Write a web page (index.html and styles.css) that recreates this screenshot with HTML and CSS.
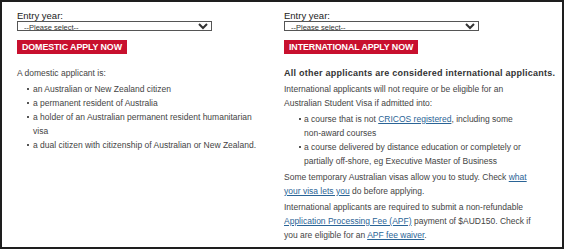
FILE: index.html
```html
<!DOCTYPE html>
<html lang="en">
<head>
    <meta charset="UTF-8">
    <title>Apply now</title>
    <link rel="stylesheet" href="styles.css">
</head>
<body>
    <div class="frame">
        <div class="col">
            <label class="entry-label" for="dom-year">Entry year:</label>
            <select id="dom-year" class="entry-select">
                <option>--Please select--</option>
            </select>
            <button class="apply-btn">Domestic apply now</button>
            <p>A domestic applicant is:</p>
            <ul class="list list-left">
                <li>an Australian or New Zealand citizen</li>
                <li>a permanent resident of Australia</li>
                <li>a holder of an Australian permanent resident humanitarian visa</li>
                <li>a dual citizen with citizenship of Australian or New Zealand.</li>
            </ul>
        </div>
        <div class="col">
            <label class="entry-label" for="int-year">Entry year:</label>
            <select id="int-year" class="entry-select">
                <option>--Please select--</option>
            </select>
            <button class="apply-btn">International apply now</button>
            <p class="lead">All other applicants are considered international applicants.</p>
            <p>International applicants will not require or be eligible for an Australian Student Visa if admitted into:</p>
            <ul class="list list-right">
                <li>a course that is not <a href="#">CRICOS registered</a>, including some non&#8209;award courses</li>
                <li>a course delivered by distance education or completely or partially off&#8209;shore, eg Executive Master of Business</li>
            </ul>
            <p>Some temporary Australian visas allow you to study. Check <a href="#">what your visa lets you</a> do before applying.</p>
            <p>International applicants are required to submit a non&#8209;refundable <a href="#">Application Processing Fee (APF)</a> payment of $AUD150. Check if you are eligible for an <a href="#">APF fee waiver</a>.</p>
        </div>
    </div>
</body>
</html>
```

FILE: styles.css
```css
html, body {
    margin: 0;
    padding: 0;
    background: #fff;
}
.frame {
    box-sizing: border-box;
    width: 564px;
    height: 249px;
    border: 2px solid #1e1e1e;
    padding: 8px 0 0 15px;
    display: grid;
    grid-template-columns: 250px 250px;
    column-gap: 17px;
    font-family: "Liberation Sans", Arial, sans-serif;
    font-size: 8.5px;
    line-height: 14px;
    color: #444;
}
.col {
    display: flex;
    flex-direction: column;
    align-items: flex-start;
}
.entry-label {
    font-size: 9.5px;
    line-height: 11px;
    color: #222;
}
.entry-select {
    box-sizing: border-box;
    width: 195px;
    height: 10px;
    margin: 0;
    padding: 0 0 0 2px;
    border: 1px solid #555;
    border-radius: 0;
    background: #fff;
    font-family: inherit;
    font-size: 7.5px;
    line-height: 8px;
    color: #333;
}
.apply-btn {
    margin: 9px 0 12px;
    padding: 0 5px;
    height: 14px;
    border: none;
    background: #c8102e;
    color: #fff;
    font-family: inherit;
    font-size: 8.9px;
    font-weight: bold;
    text-transform: uppercase;
    letter-spacing: -0.1px;
}
p {
    margin: 0 0 2px;
}
.lead {
    font-size: 9px;
    font-weight: bold;
    letter-spacing: 0.25px;
    color: #333;
    white-space: nowrap;
}
.list {
    margin: 0 0 2px;
    padding: 0;
    list-style: none;
}
.list li {
    position: relative;
}
.list li::before {
    content: "";
    position: absolute;
    top: 6px;
    width: 2px;
    height: 2px;
    background: #555;
}
.list-left li {
    padding-left: 16px;
}
.list-left li::before {
    left: 10px;
}
.list-right li {
    padding-left: 20px;
}
.list-right li::before {
    left: 15px;
}
a {
    color: #2a6496;
    text-decoration: underline;
}
```
